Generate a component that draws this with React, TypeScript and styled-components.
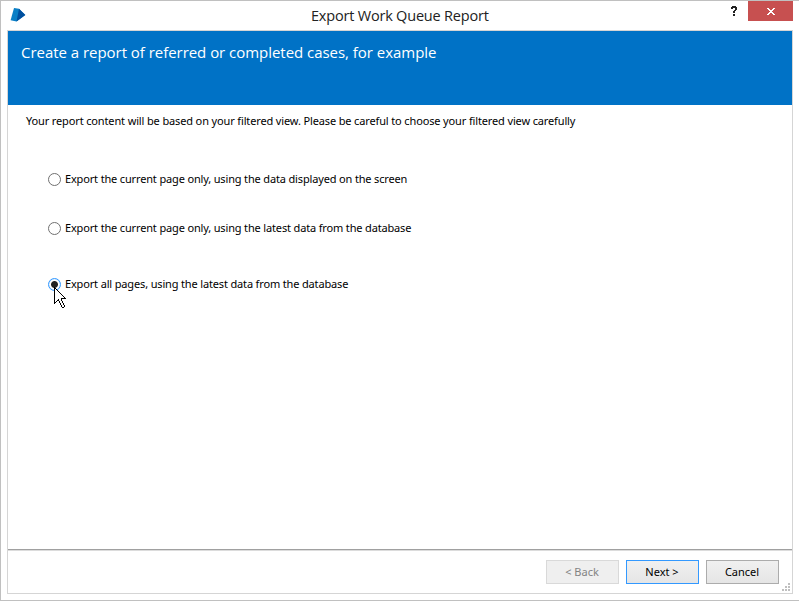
import React, { useState } from "react";
import styled, { createGlobalStyle } from "styled-components";

const GlobalStyle = createGlobalStyle`
  * { box-sizing: border-box; }
  body { margin: 0; background: #fff; overflow: hidden; }
`;

const Dialog = styled.main`
  width: 799px;
  height: 601px;
  display: flex;
  flex-direction: column;
  padding: 0 6px 6px;
  background: #fff;
  border: solid #c0c0c0;
  border-width: 1px 0 1px 1px;
  font: 11px/16px "Noto Sans", "Open Sans", sans-serif;
  color: #000;
`;

const TitleBar = styled.header`
  height: 29px;
  flex: none;
  display: grid;
  grid-template-columns: 304px 1fr auto auto;
  align-items: start;
`;

const Logo = styled.svg`
  display: block;
  margin: 6px 0 0 3px;
`;

const Title = styled.h1`
  margin: 4px 0 0;
  font: 400 14.5px/22px "Open Sans", "Noto Sans", sans-serif;
  letter-spacing: -0.2px;
  color: #222;
  white-space: nowrap;
`;

const HelpButton = styled.button`
  width: 28px;
  height: 20px;
  padding: 0;
  border: 0;
  background: none;
`;

const CloseButton = styled.button`
  width: 45px;
  height: 20px;
  padding: 0;
  border: 0;
  background: #c75050;
`;

const Frame = styled.section`
  flex: 1;
  display: flex;
  flex-direction: column;
  border: 1px solid #d5d5d5;
`;

const Banner = styled.h2`
  height: 74px;
  flex: none;
  margin: 0;
  padding: 10px 13px;
  background: #0072c6;
  color: #fff;
  font: 400 15px/22px "Open Sans", "Noto Sans", sans-serif;
  letter-spacing: -0.035px;
  white-space: nowrap;
`;

const Content = styled.div`
  flex: 1;
  padding: 8px 18px 0;
`;

const Line = styled.span<{ $spacing?: number }>`
  letter-spacing: ${(p) => p.$spacing ?? 0}px;
  white-space: nowrap;
`;

const Options = styled.div`
  display: flex;
  flex-direction: column;
  padding: 42px 0 0 22px;
`;

const Option = styled.label<{ $gap?: number }>`
  position: relative;
  display: flex;
  align-items: center;
  height: 16px;
  gap: 4px;
  margin-bottom: ${(p) => p.$gap ?? 0}px;
`;

const Radio = styled.input`
  appearance: none;
  flex: none;
  width: 13px;
  height: 13px;
  margin: 0;
  border: 1px solid #707070;
  border-radius: 50%;
  background: #fff;

  &:checked {
    border-color: #3399ff;
    background: radial-gradient(circle, #222 0 3px, #fff 3.9px 4.6px, #cfe6ff 5.5px);
  }
`;

const Pointer = styled.svg`
  position: absolute;
  left: 6px;
  top: 11px;
`;

const Footer = styled.footer`
  height: 44px;
  flex: none;
  display: flex;
  gap: 7px;
  justify-content: flex-end;
  align-items: flex-start;
  padding: 10px 1px 0 0;
  border-top: 1px solid #a0a0a0;
  box-shadow: inset 0 1px #dcdcdc;
`;

const Button = styled.button<{ $primary?: boolean }>`
  width: 73px;
  height: 24px;
  padding: 0 1px 1px 0;
  border: 1px solid ${(p) => (p.$primary ? "#3399ff" : "#acacac")};
  background: linear-gradient(#f0f0f0, #e5e5e5);
  color: #000;
  font: inherit;

  &:disabled {
    border-color: #d9d9d9;
    background: #efefef;
    color: #838383;
  }
`;

const Grip = styled.svg`
  align-self: flex-end;
  margin: 0 1px 2px -4px;
`;

const choices = [
  { text: "Export the current page only, using the data displayed on the screen", gap: 33 },
  { text: "Export the current page only, using the latest data from the database", gap: 40 },
  { text: "Export all pages, using the latest data from the database", gap: 0 },
];

const pointerRows = [
  "X",
  "XX",
  "X.X",
  "X..X",
  "X...X",
  "X....X",
  "X.....X",
  "X......X",
  "X.......X",
  "X........X",
  "X.........X",
  "X......XXXXX",
  "X...X..X",
  "X..XX..X",
  "X.X  X..X",
  "XX   X..X",
  "X     X..X",
  "      X..X",
  "       X..X",
  "       X..X",
  "        XX",
];

const pixels = (rows: string[], mark: string) =>
  rows.flatMap((row, y) => [...row].map((c, x) => (c === mark ? `M${x} ${y}h1v1h-1z` : ""))).join("");

export default function App() {
  const [selected, setSelected] = useState(2);
  return (
    <>
      <GlobalStyle />
      <Dialog>
        <TitleBar>
          <Logo width="16" height="16" viewBox="0 0 16 16">
            <path d="M4 1 9 1.8 15.3 8 6.5 14.6 0.6 13.2z" fill="#0a7fc6" />
            <path d="M9 1.8 15.3 8 6.5 14.6z" fill="#004f9e" />
          </Logo>
          <Title>Export Work Queue Report</Title>
          <HelpButton aria-label="Help">
            <svg width="28" height="20" shapeRendering="crispEdges">
              <path d="M12 5h4v1h1v3h-1v1h-1v2h-2v-2h1v-1h1v-2h-2v1h-2v-2h1zM13 13h2v2h-2z" fill="#222" />
            </svg>
          </HelpButton>
          <CloseButton aria-label="Close">
            <svg width="45" height="20" shapeRendering="crispEdges">
              <path d="M19 7h2v1h1v1h2v-1h1v-1h2v1h-1v1h-1v1h-1v1h1v1h1v1h1v1h-2v-1h-1v-1h-2v1h-1v1h-2v-1h1v-1h1v-1h1v-1h-1v-1h-1v-1h-1z" fill="#fff" />
            </svg>
          </CloseButton>
        </TitleBar>
        <Frame>
          <Banner>Create a report of referred or completed cases, for example</Banner>
          <Content>
            <Line $spacing={-0.137}>
              Your report content will be based on your filtered view. Please be careful to choose your filtered view carefully
            </Line>
            <Options>
              {choices.map((choice, i) => (
                <Option key={choice.text} $gap={choice.gap}>
                  <Radio type="radio" name="scope" checked={selected === i} onChange={() => setSelected(i)} />
                  <Line $spacing={-0.155}>{choice.text}</Line>
                  {i === 2 && (
                    <Pointer width="12" height="21" shapeRendering="crispEdges">
                      <path d={pixels(pointerRows, ".")} fill="#fff" />
                      <path d={pixels(pointerRows, "X")} fill="#000" />
                    </Pointer>
                  )}
                </Option>
              ))}
            </Options>
          </Content>
          <Footer>
            <Button disabled>&lt; Back</Button>
            <Button $primary>Next &gt;</Button>
            <Button>Cancel</Button>
            <Grip width="8" height="8" shapeRendering="crispEdges">
              <path d="M6 0h2v2h-2zM3 3h2v2h-2zM6 3h2v2h-2zM0 6h2v2h-2zM3 6h2v2h-2zM6 6h2v2h-2z" fill="#bfbfbf" />
            </Grip>
          </Footer>
        </Frame>
      </Dialog>
    </>
  );
}
